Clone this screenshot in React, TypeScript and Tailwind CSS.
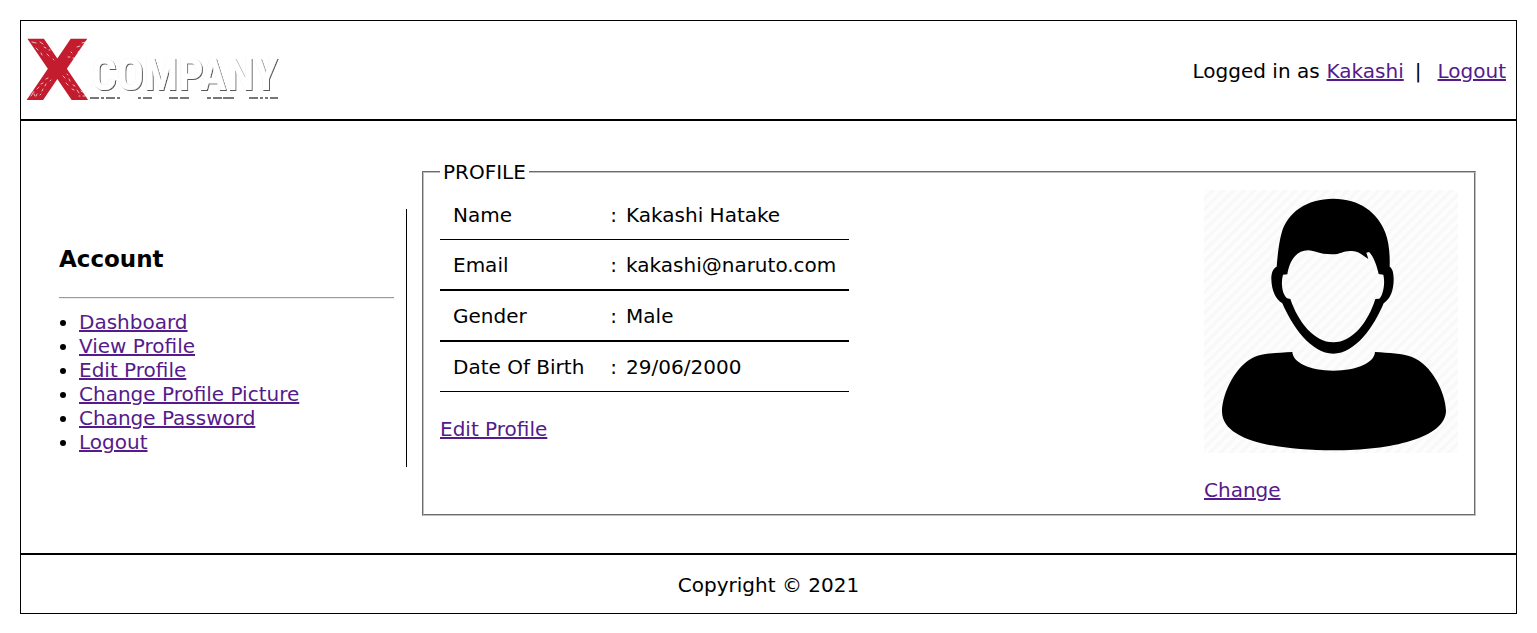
import type { ReactNode } from "react";

const accountLinks = [
  "Dashboard",
  "View Profile",
  "Edit Profile",
  "Change Profile Picture",
  "Change Password",
  "Logout",
];

const profileRows = [
  { label: "Name", value: "Kakashi Hatake", line: "border-b" },
  { label: "Email", value: "kakashi@naruto.com", line: "border-b-2" },
  { label: "Gender", value: "Male", line: "border-b-2" },
  { label: "Date Of Birth", value: "29/06/2000", line: "border-b" },
];

function TextLink({ children }: { children: ReactNode }) {
  return (
    <a href="#" className="text-[#551a8b] underline">
      {children}
    </a>
  );
}

function Logo() {
  return (
    <svg
      viewBox="0 0 256 64"
      className="h-16 w-64 shrink-0 overflow-visible"
      role="img"
      aria-label="X Company"
    >
      <defs>
        <filter id="lift" x="-5%" y="-20%" width="115%" height="140%">
          <feDropShadow dx="0" dy="0" stdDeviation="0.5" floodColor="#000" floodOpacity="0.25" />
          <feDropShadow dx="1" dy="1" stdDeviation="0.7" floodColor="#000" floodOpacity="0.65" />
        </filter>
      </defs>
      <text
        x="0"
        y="62"
        fontSize="84"
        className="fill-[#c21c2e] font-['DejaVu_Sans'] font-bold"
      >
        X
      </text>
      <g stroke="#fff" strokeLinecap="round" fill="none" opacity="0.7" strokeWidth="1">
        <path d="M7 4l4 1M15 4l3 2M11 10l2 2M19 9l2 1M16 15l1 2M22 16l2 2M28 21l1 1M24 12l1 0" />
        <path d="M57 5l4-1M52 9l3-1M46 14l1 1M53 14l2-1M43 19l2 0M59 7l1-1M48 20l1 0" />
        <path d="M6 58l2-3M11 58l1-2M12 51l2-2M17 53l1-2M16 46l2-1M20 48l1-2M21 41l2-1M9 56l1 2M15 57l1-1M25 43l1-1M8 54l1 0" />
        <path d="M38 38l2 2M44 41l1 2M41 45l2 2M48 47l2 1M47 51l2 1M52 52l2 3M56 53l1 1M58 58l2 0M54 58l1 0M42 36l1 1" />
      </g>
      <text
        x="66"
        y="52"
        fontSize="45"
        fill="#fff"
        filter="url(#lift)"
        className="font-['Noto_Sans_ExtraCondensed','Roboto_Condensed',Roboto,sans-serif] font-bold"
      >
        COMPANY
      </text>
      <g stroke="#777" strokeWidth="2">
        <path d="M65 60h9M76 60h3M81 60h9M92 60h3" />
        <path d="M113 60h3M118 60h9M144 60h9M155 60h9" />
        <path d="M182 60h4M188 60h9M198 60h11M224 60h9M235 60h3M240 60h3M245 60h8" />
      </g>
    </svg>
  );
}

function Avatar() {
  return (
    <svg
      viewBox="42 30 762 789"
      className="h-[263px] w-[254px]"
      role="img"
      aria-label="Profile picture"
    >
      <defs>
        <pattern
          id="stripes"
          width="22"
          height="22"
          patternUnits="userSpaceOnUse"
          patternTransform="rotate(45)"
        >
          <rect width="22" height="22" fill="#fdfdfd" />
          <rect width="9" height="22" fill="#f8f8f8" />
        </pattern>
      </defs>
      <rect x="42" y="30" width="762" height="789" fill="url(#stripes)" />
      <path
        fillRule="evenodd"
        d="M430 56C350 56 292 98 275 158C267 186 263 222 260 260C248 266 244 280 244 298C245 330 256 358 277 370C307 440 364 521 430 521C496 521 552 440 581 370C602 356 611 330 611 298C611 280 608 266 599 260C600 222 597 186 586 158C564 98 508 56 430 56Z
           M292 283C298 244 318 211 354 211C374 211 386 223 425 223C454 223 460 211 486 213C507 214 518 226 535 237L529 218L537 216C549 227 560 254 566 282L580 284C586 308 580 346 568 356L556 357C535 425 488 487 430 487C372 487 324 425 301 357L291 355C276 342 272 308 279 284Z"
      />
      <path d="M307 516C262 519 223 519 193 531C140 554 97 636 96 695C97 782 260 811 430 811C602 811 767 774 768 692C766 636 725 554 666 531C636 519 598 519 555 516C553 548 502 572 430 572C359 572 309 548 307 516Z" />
    </svg>
  );
}

export default function App() {
  return (
    <div className="p-5 font-['Verdana','DejaVu_Sans',sans-serif] text-xl leading-6 text-black">
      <div className="border border-black">
        <header className="flex items-center justify-between border-b-2 border-black py-[17px] pr-[10px] pl-1">
          <Logo />
          <p className="flex gap-[7px] pt-[2px]">
            <span>Logged in as</span>
            <TextLink>Kakashi</TextLink>
            <span className="mr-[9px] ml-1">|</span>
            <TextLink>Logout</TextLink>
          </p>
        </header>

        <main className="flex items-center border-b-2 border-black pt-[39px] pr-10 pb-[37px] pl-[38px]">
          <aside className="w-[348px] shrink-0 border-r border-black pt-9 pr-3 pb-[13px]">
            <h3 className="mb-6 text-[23px] leading-7 font-bold">Account</h3>
            <hr className="mb-[11px] border-t border-b border-t-[#9a9a9a] border-b-[#eeeeee]" />
            <ul className="list-disc pl-5">
              {accountLinks.map((label) => (
                <li key={label}>
                  <TextLink>{label}</TextLink>
                </li>
              ))}
            </ul>
          </aside>

          <fieldset className="ml-[15px] min-w-0 flex-1 border-2 border-[#c0c0c0] px-4 pb-3 [border-style:groove]">
            <legend className="px-[3px]">PROFILE</legend>
            <div className="flex justify-between pt-[6px]">
              <div>
                <table className="mb-[25px] border-separate border-spacing-0">
                  <tbody>
                    {profileRows.map(({ label, value, line }) => (
                      <tr key={label}>
                        <th
                          scope="row"
                          className={`${line} border-black pt-[13px] pr-[26px] pb-3 pl-[13px] text-left font-normal`}
                        >
                          {label}
                        </th>
                        <td className={`${line} border-black pt-[13px] pr-[13px] pb-3`}>
                          <span className="mr-[9px]">:</span>
                          {value}
                        </td>
                      </tr>
                    ))}
                  </tbody>
                </table>
                <TextLink>Edit Profile</TextLink>
              </div>
              <div className="flex flex-col items-start gap-[25px]">
                <Avatar />
                <TextLink>Change</TextLink>
              </div>
            </div>
          </fieldset>
        </main>

        <footer className="pt-[18px] pb-4 text-center">Copyright © 2021</footer>
      </div>
    </div>
  );
}
